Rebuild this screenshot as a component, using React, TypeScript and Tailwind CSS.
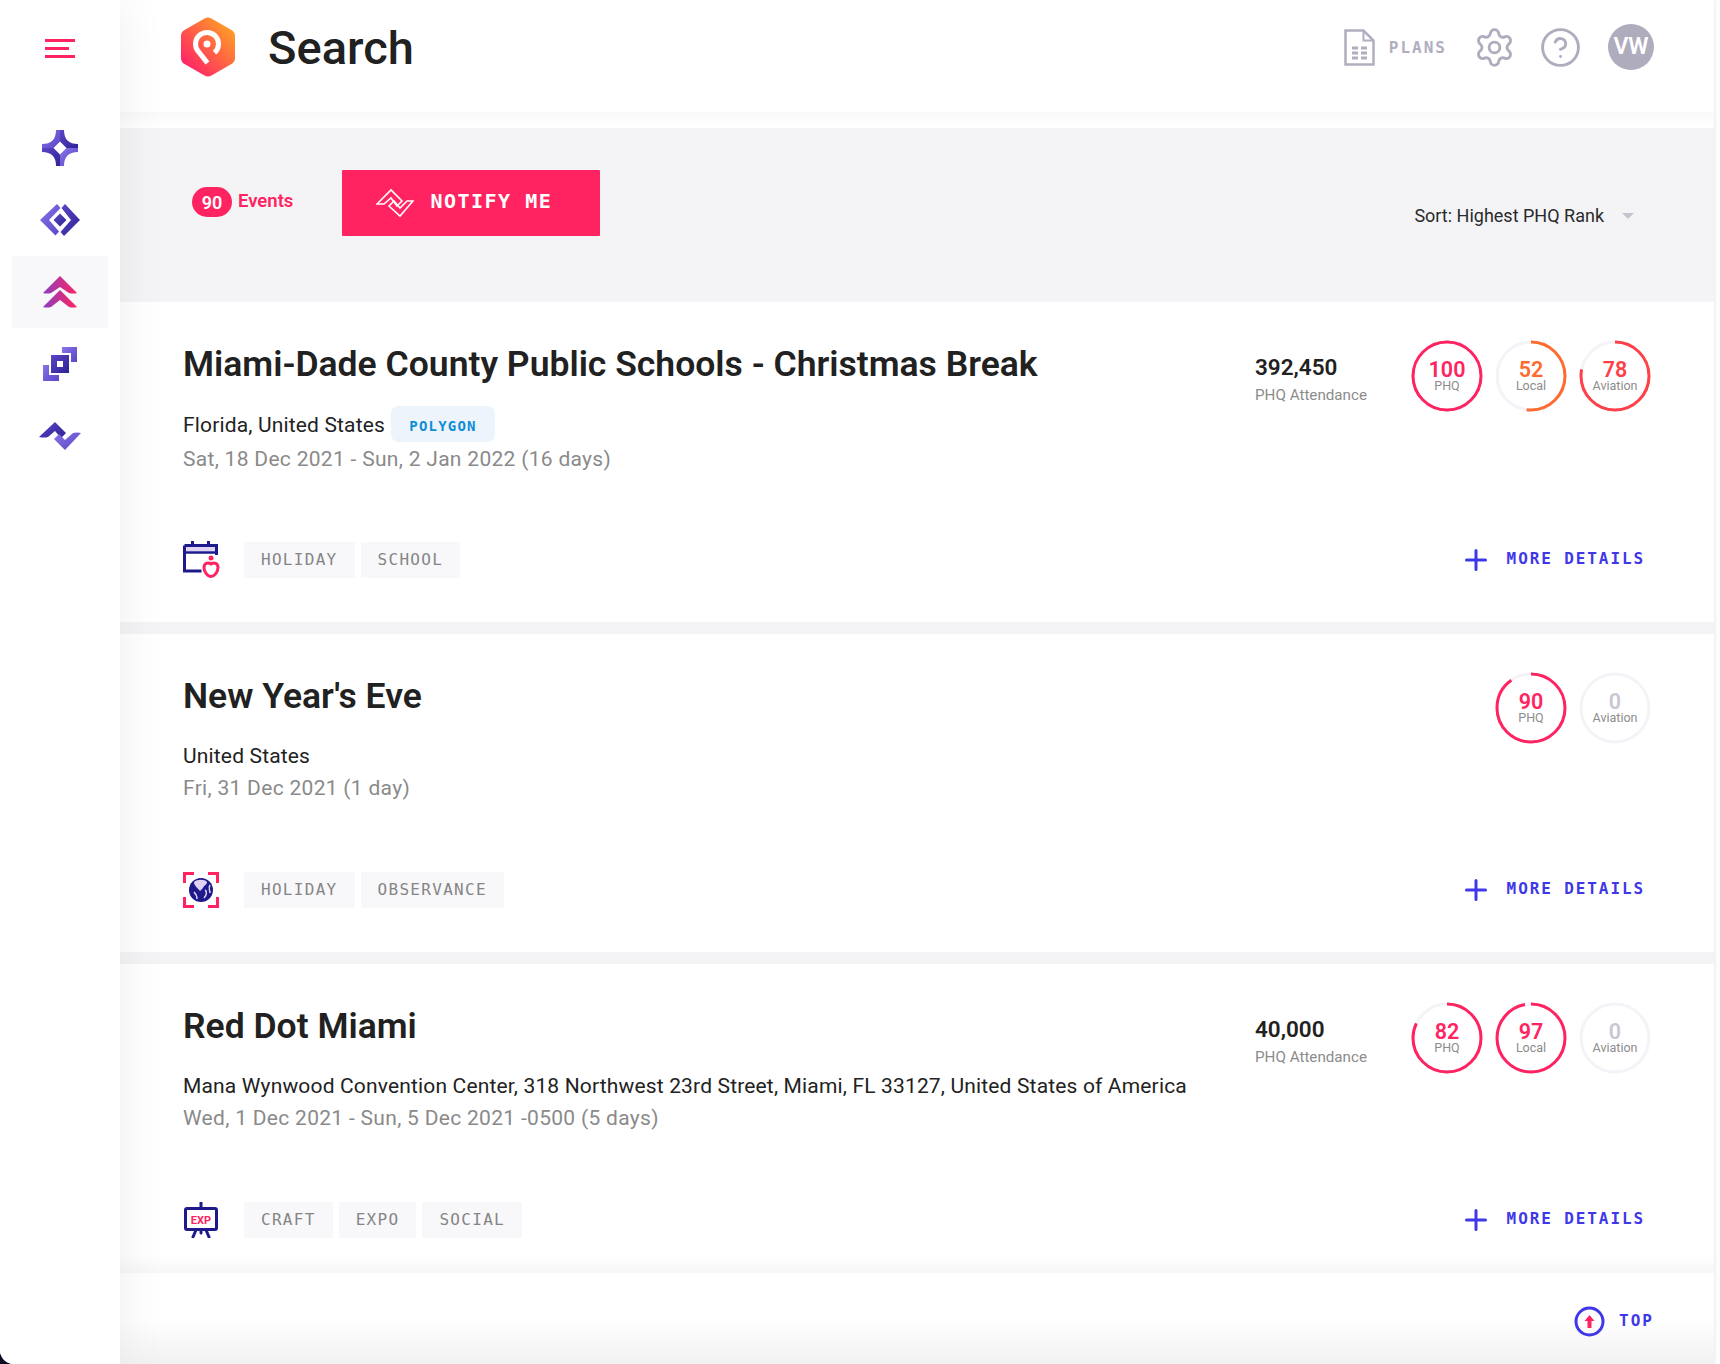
import React from "react";
import { Settings, CircleHelp } from "lucide-react";

const sans = "font-['Roboto','Liberation_Sans',sans-serif]";
const mono = "font-['DejaVu_Sans_Mono','Liberation_Mono',monospace]";

function Defs() {
  return (
    <svg width="0" height="0" className="absolute">
      <defs>
        <linearGradient id="lite" x1="0" y1="0" x2="1" y2="1">
          <stop offset="0" stopColor="#8a73e6" />
          <stop offset="1" stopColor="#5a45c8" />
        </linearGradient>
        <linearGradient id="dark" x1="0" y1="0" x2="1" y2="1">
          <stop offset="0" stopColor="#5b46c6" />
          <stop offset="1" stopColor="#2e2396" />
        </linearGradient>
        <linearGradient id="pinky" x1="0" y1="0" x2="1" y2="0">
          <stop offset="0" stopColor="#8a3fc0" />
          <stop offset="1" stopColor="#ff2461" />
        </linearGradient>
        <linearGradient id="logo" x1="0" y1="1" x2="1" y2="0">
          <stop offset="0.1" stopColor="#ff2068" />
          <stop offset="1" stopColor="#ffb01c" />
        </linearGradient>
      </defs>
    </svg>
  );
}

function StarIcon() {
  return (
    <svg width="36" height="36" viewBox="0 0 36 36">
      <path d="M18 0h4Q22 14 36 14v4H24.500L18 11.500z" fill="url(#dark)" />
      <path d="M36 18v4Q22 22 22 36h-4V24.500L24.500 18z" fill="url(#lite)" />
      <path d="M18 36h-4Q14 22 0 22v-4h11.500L18 24.500z" fill="url(#dark)" />
      <path d="M0 18v-4Q14 14 14 0h4v11.500L11.500 18z" fill="url(#lite)" />
    </svg>
  );
}

function DiamondIcon() {
  return (
    <svg width="40" height="32" viewBox="0 0 40 32">
      <path d="M17 0l3.500 4L9 16l10 11.500-3.500 4L0 16z" fill="url(#lite)" />
      <path d="M25 0l15 16-16 16-3.500-4L31 16 21.500 4z" fill="url(#dark)" />
      <path d="M20 9.500l6.500 6.500-6.500 6.500-6.500-6.500z" fill="url(#dark)" />
    </svg>
  );
}

function ChevronsIcon() {
  return (
    <svg width="36" height="32" viewBox="0 0 36 32">
      <path d="M18 0l17 17q-4 1-8 0l-9-6-9 6q-4 1-8 0z" fill="url(#pinky)" />
      <path d="M18 14l17 17q-4 1-8 0l-9-7-9 7q-4 1-8 0z" fill="url(#pinky)" />
    </svg>
  );
}

function SquaresIcon() {
  return (
    <svg width="34" height="34" viewBox="0 0 34 34">
      <path d="M19 0h15v15h-6V6h-9z" fill="url(#lite)" />
      <path d="M0 18h6v10h10v6H0z" fill="url(#lite)" />
      <path fillRule="evenodd" d="M8 8h18v18H8zM14 14v6h6v-6z" fill="url(#dark)" />
    </svg>
  );
}

function WaveIcon() {
  return (
    <svg width="42" height="30" viewBox="0 0 42 30">
      <path d="M0 16L16 1l11 11-5 5-6-7-7 6q-4 1-9 0z" fill="url(#dark)" />
      <path d="M15 18l5-5 6 6 8-7q4-1 8 0L26 29z" fill="url(#lite)" />
    </svg>
  );
}

function NotifyIcon() {
  return (
    <svg width="38" height="30" viewBox="0 0 38 30" fill="none" stroke="#fff" strokeWidth="1.600" strokeLinejoin="miter">
      <path d="M1 16L15 2l11 11-5 5-6-8-7 6z" />
      <path d="M13 18l5-5 6 7 7-7h6L24 28z" />
    </svg>
  );
}

function Logo() {
  return (
    <svg width="56" height="60" viewBox="0 0 56 60" className="mt-[-18px]">
      <path
        d="M24.500 1.500c2-1.200 5-1.200 7 0l20 11.500c2.200 1.300 3.500 3.300 3.500 6v22c0 2.700-1.300 4.700-3.500 6l-20 11.500c-2 1.200-5 1.200-7 0L4.500 47C2.300 45.700 1 43.700 1 41V19c0-2.700 1.300-4.700 3.500-6z"
        fill="url(#logo)"
      />
      <path d="M27.500 46L18.500 34.700A11.500 11.500 0 1 1 34.500 35.700" fill="none" stroke="#fff" strokeWidth="5" />
      <circle cx="27" cy="27" r="3.500" fill="#fff" />
    </svg>
  );
}

function DocIcon() {
  return (
    <svg width="31" height="37" viewBox="0 0 31 37" fill="none" stroke="#b0aec0" strokeWidth="2.500">
      <path d="M1.500 1.500h18l10 10v24h-28z" />
      <path d="M19.500 1.500v10h10" strokeWidth="2" />
      <path d="M8 19h6M17 19h6M8 24h6M17 24h6M8 29h6M17 29h6" strokeWidth="3" />
    </svg>
  );
}

function CalendarIcon() {
  return (
    <svg width="38" height="38" viewBox="0 0 38 38">
      <path d="M8 0h3v4H8zM24 0h3v4h-3z" fill="#1f1a8c" />
      <path d="M1.500 4.500h32V14M1.500 4.500V30h17" fill="none" stroke="#1f1a8c" strokeWidth="3" />
      <rect x="3" y="6" width="29" height="4" fill="#e0d4f5" />
      <path d="M1.500 11.500h32" stroke="#1f1a8c" strokeWidth="2.500" />
      <circle cx="28" cy="17" r="2.500" fill="#ff2461" />
      <path d="M28 23c-3-2-7-1-7 3.500 0 4.500 3.500 9 7 9s7-4.500 7-9c0-4.500-4-5.500-7-3.500z" fill="none" stroke="#ff2461" strokeWidth="3" />
    </svg>
  );
}

function GlobeIcon() {
  return (
    <svg width="36" height="36" viewBox="0 0 36 36">
      <path d="M1.500 11V1.500H11M25 1.500h9.500V11M34.500 25v9.500H25M11 34.500H1.500V25" fill="none" stroke="#ff2461" strokeWidth="3" />
      <circle cx="18" cy="18" r="12" fill="#1f1a8c" />
      <path d="M11 10c3-3 11-3 13 0 0 3-3 3-4 6l-3 3c-2-3-6-5-6-9z" fill="#e0d4f5" />
      <path d="M11 20c2 2 3 4 3 7M22 18c2 1 2 5-1 8M27 13c-2 3 0 6 0 8" fill="none" stroke="#e0d4f5" strokeWidth="1.500" />
    </svg>
  );
}

function ExpIcon() {
  return (
    <svg width="36" height="36" viewBox="0 0 36 36">
      <path d="M18 0v6" stroke="#1f1a8c" strokeWidth="3" strokeLinecap="round" />
      <rect x="2.500" y="6.500" width="31" height="21" rx="1.500" fill="#fff" stroke="#1f1a8c" strokeWidth="3" />
      <path d="M13 28l-3 7M23 28l3 7M18 28v3" stroke="#1f1a8c" strokeWidth="3" strokeLinecap="round" />
      <text x="18" y="21.500" textAnchor="middle" fontSize="11" fontWeight="700" fill="#ff2461" fontFamily="Roboto, sans-serif">EXP</text>
    </svg>
  );
}

function Ring({ value, label, color }: { value: number; label: string; color: string }) {
  const r = 34;
  const c = 2 * Math.PI * r;
  return (
    <div className="relative w-[72px] h-[72px] flex flex-col items-center justify-center">
      <svg width="72" height="72" viewBox="0 0 72 72" className="absolute inset-0 -rotate-90">
        <circle cx="36" cy="36" r={r} fill="none" stroke="#f3f3f8" strokeWidth="3" />
        <circle
          cx="36"
          cy="36"
          r={r}
          fill="none"
          stroke={color}
          strokeWidth="3"
          strokeDasharray={`${(c * value) / 100} ${c}`}
        />
      </svg>
      <div className="text-[21.500px] leading-[18px] font-semibold" style={{ color }}>{value}</div>
      <div className="text-[12.500px] leading-[13px] text-[#8c8c8c]">{label}</div>
    </div>
  );
}

function Tag({ children }: { children: React.ReactNode }) {
  return (
    <div className={`${mono} h-9 px-[17px] flex items-center bg-[#f8f8fb] text-[#858585] text-[16px] tracking-[1.300px]`}>
      {children}
    </div>
  );
}

function Card({
  title,
  location,
  chip,
  date,
  attendance,
  rings,
  icon,
  tags,
  height,
  bottom,
}: {
  title: string;
  location: string;
  chip?: string;
  date: string;
  attendance?: string;
  rings: { value: number; label: string; color: string }[];
  icon: React.ReactNode;
  tags: string[];
  height: string;
  bottom: string;
}) {
  return (
    <section className={`${height} ${bottom} bg-white pl-[63px] pr-[63px] pt-[39px] flex flex-col justify-between`}>
      <div className="flex justify-between items-start">
        <div>
          <h2 className="text-[35.500px] leading-[44px] font-semibold text-[#212121] mt-[1px]">{title}</h2>
          <div className={`mt-[22px] flex items-center gap-[6px] text-[21px] tracking-[0.160px] text-[#222] ${chip ? "h-9" : "h-[34px]"}`}>
            <span>{location}</span>
            {chip && (
              <span className={`${mono} font-bold w-[104px] h-9 mt-[-4px] pt-[5px] rounded-lg bg-[#edf4fb] text-[#0f8dd6] text-[14px] tracking-[1.200px] flex items-center justify-center`}>
                {chip}
              </span>
            )}
          </div>
          <div className={`text-[21px] leading-[28px] tracking-[0.300px] text-[#8a8a8a] ${chip ? "mt-[1px]" : "mt-0"}`}>{date}</div>
        </div>
        <div className="flex items-start mt-[-1px]">
          {attendance && (
            <div className="w-[156px] pt-[14px]">
              <div className="text-[22.500px] leading-[26px] font-semibold text-[#212121]">{attendance}</div>
              <div className="mt-[3px] text-[15.200px] leading-[24px] text-[#8c8c8c]">PHQ Attendance</div>
            </div>
          )}
          <div className="flex gap-3">
            {rings.map((x) => (
              <Ring key={x.label} {...x} />
            ))}
          </div>
        </div>
      </div>
      <div className="flex justify-between items-center">
        <div className="flex items-center">
          <div className="w-[61px]">{icon}</div>
          <div className="flex gap-[6px]">
            {tags.map((t) => (
              <Tag key={t}>{t}</Tag>
            ))}
          </div>
        </div>
        <div className="flex items-center gap-5 pr-[6px]">
          <svg width="22" height="22" viewBox="0 0 22 22" stroke="#3f38e8" strokeWidth="3" strokeLinecap="round">
            <path d="M11 1.500v19M1.500 11h19" />
          </svg>
          <span className={`${mono} font-bold text-[16px] tracking-[1.900px] text-[#3f38e8] mt-[-2px]`}>MORE DETAILS</span>
        </div>
      </div>
    </section>
  );
}

const PINK = "#ff2461";

export default function App() {
  return (
    <div className="w-[1720px] h-[1364px] bg-[#0b0b20] overflow-hidden">
      <Defs />
      <div className={`${sans} w-full h-full bg-white rounded-bl-[14px] overflow-hidden flex`}>
        <aside className="relative z-10 w-[120px] shrink-0 bg-white shadow-[0_0_50px_rgba(0,0,0,0.07)] flex flex-col items-center">
          <div className="mt-[39px] w-[30px] flex flex-col gap-[5px]">
            <div className="h-[3px] bg-[#ff2461]" />
            <div className="h-[3px] w-6 bg-[#ff2461]" />
            <div className="h-[3px] bg-[#ff2461]" />
          </div>
          <div className="mt-[54px] w-24 flex flex-col items-center">
            <div className="h-[72px] flex items-center justify-center"><StarIcon /></div>
            <div className="h-[72px] flex items-center justify-center"><DiamondIcon /></div>
            <div className="h-[72px] w-full flex items-center justify-center bg-[#f8f8fb]"><ChevronsIcon /></div>
            <div className="h-[72px] flex items-center justify-center"><SquaresIcon /></div>
            <div className="h-[72px] flex items-center justify-center"><WaveIcon /></div>
          </div>
        </aside>

        <main className="w-[1594px] h-full flex flex-col shadow-[2px_0_2px_rgba(0,0,0,0.06)]">
          <header className="h-[112px] shrink-0 bg-white flex items-center pl-[60px] pr-[60px]">
            <Logo />
            <h1 className="ml-[32px] text-[47px] leading-[56px] font-medium text-[#212121] mt-[-16px]">Search</h1>
            <div className="ml-auto flex items-center mt-[-18px]">
              <DocIcon />
              <span className={`${mono} ml-[14px] font-bold text-[16px] tracking-[2px] text-[#b0aec0] mt-[2px]`}>PLANS</span>
              <Settings className="ml-[26px]" size={43} color="#aeacbd" strokeWidth={1.600} />
              <CircleHelp className="ml-[23px]" size={43} color="#aeacbd" strokeWidth={1.600} />
              <div className="ml-[26px] w-[46px] h-[46px] rounded-full bg-[#aeacbd] text-white text-[23px] font-semibold flex items-center justify-center">VW</div>
            </div>
          </header>
          <div className="h-4 shrink-0 bg-gradient-to-b from-[#f9f9f9] to-white" />

          <div className="h-[174px] shrink-0 bg-[#f4f4f7] flex items-start pl-[72px] pr-[80px]">
            <div className="mt-[59px] flex items-center">
              <span className="w-10 h-[30px] rounded-full bg-[#ff2461] text-white text-[18px] font-semibold flex items-center justify-center">90</span>
              <span className="ml-[6px] text-[18.500px] font-semibold text-[#ff2461]">Events</span>
            </div>
            <button className="ml-[49px] mt-[42px] w-[258px] h-[66px] rounded-[1px] bg-[#ff2461] flex items-center pl-[34px] gap-[16px]">
              <NotifyIcon />
              <span className={`${mono} font-bold text-white text-[20px] tracking-[1.500px] mt-[-4px]`}>NOTIFY ME</span>
            </button>
            <div className="ml-auto mt-[74px] flex items-center gap-[18px] text-[18px] text-[#2a2a2a]">
              <span>Sort: Highest PHQ Rank</span>
              <span className="w-0 h-0 border-x-[6px] border-x-transparent border-t-[6px] border-t-[#c5c5d0]" />
            </div>
          </div>

          <Card
            height="h-[320px]"
            bottom="pb-[43px]"
            title="Miami-Dade County Public Schools - Christmas Break"
            location="Florida, United States"
            chip="POLYGON"
            date="Sat, 18 Dec 2021 - Sun, 2 Jan 2022 (16 days)"
            attendance="392,450"
            rings={[
              { value: 100, label: "PHQ", color: PINK },
              { value: 52, label: "Local", color: "#ff6a2f" },
              { value: 78, label: "Aviation", color: "#ff4048" },
            ]}
            icon={<CalendarIcon />}
            tags={["HOLIDAY", "SCHOOL"]}
          />
          <div className="h-3 shrink-0 bg-[#f4f4f7]" />
          <Card
            height="h-[318px]"
            bottom="pb-[44px]"
            title="New Year's Eve"
            location="United States"
            date="Fri, 31 Dec 2021 (1 day)"
            rings={[
              { value: 90, label: "PHQ", color: PINK },
              { value: 0, label: "Aviation", color: "#c9c7d4" },
            ]}
            icon={<GlobeIcon />}
            tags={["HOLIDAY", "OBSERVANCE"]}
          />
          <div className="h-3 shrink-0 bg-[#f4f4f7]" />
          <Card
            height="h-[291px]"
            bottom="pb-[17px]"
            title="Red Dot Miami"
            location="Mana Wynwood Convention Center, 318 Northwest 23rd Street, Miami, FL 33127, United States of America"
            date="Wed, 1 Dec 2021 - Sun, 5 Dec 2021 -0500 (5 days)"
            attendance="40,000"
            rings={[
              { value: 82, label: "PHQ", color: PINK },
              { value: 97, label: "Local", color: PINK },
              { value: 0, label: "Aviation", color: "#c9c7d4" },
            ]}
            icon={<ExpIcon />}
            tags={["CRAFT", "EXPO", "SOCIAL"]}
          />
          <div className="h-[18px] shrink-0 bg-gradient-to-b from-white to-[#f6f6f6]" />
          <footer className="h-[91px] shrink-0 bg-gradient-to-b from-white via-white to-[#f1f1f1] flex items-start justify-end pr-[60px] pt-[33px]">
            <div className="flex items-center gap-[14px]">
              <svg width="31" height="31" viewBox="0 0 31 31">
                <circle cx="15.500" cy="15.500" r="13.500" fill="none" stroke="#3f38e8" strokeWidth="3" />
                <path d="M15.500 9l5 6h-3v7h-4v-7h-3z" fill="#ff2461" />
              </svg>
              <span className={`${mono} font-bold text-[16px] tracking-[2px] text-[#3f38e8] mt-[-2px]`}>TOP</span>
            </div>
          </footer>
        </main>
      </div>
    </div>
  );
}
